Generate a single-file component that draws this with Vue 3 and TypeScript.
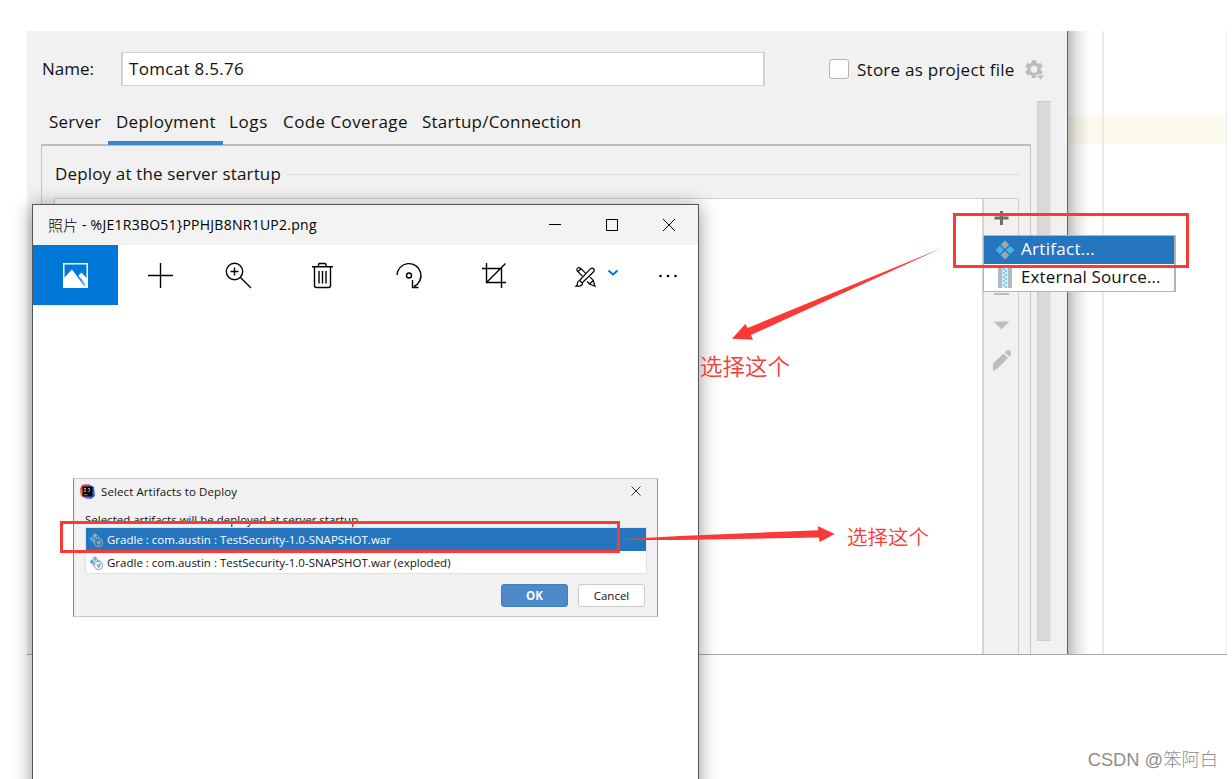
<script setup lang="ts">
interface Tab {
  key: string
  label: string
  active?: boolean
}

interface Artifact {
  name: string
  selected: boolean
}

const tabs: Tab[] = [
  { key: 'server', label: 'Server' },
  { key: 'deployment', label: 'Deployment', active: true },
  { key: 'logs', label: 'Logs' },
  { key: 'coverage', label: 'Code Coverage' },
  { key: 'startup', label: 'Startup/Connection' },
]

const artifacts: Artifact[] = [
  { name: 'Gradle : com.austin : TestSecurity-1.0-SNAPSHOT.war', selected: true },
  { name: 'Gradle : com.austin : TestSecurity-1.0-SNAPSHOT.war (exploded)', selected: false },
]
</script>

<template>
  <main class="desktop">
    <section class="ide">
      <div class="config">
        <div class="form">
          <div class="name-row">
            <label class="name-label">Name:</label>
            <div class="name-input">Tomcat 8.5.76</div>
            <span class="checkbox"></span>
            <span class="store">Store as project file</span>
            <svg class="gear" width="20" height="21" viewBox="0 0 20 21">
              <g fill="#bdbdbd">
                <rect x="6.7" y="0.3" width="4.6" height="17.8" rx="0.6" />
                <rect x="6.7" y="0.3" width="4.6" height="17.8" rx="0.6" transform="rotate(60 9 9.2)" />
                <rect x="6.7" y="0.3" width="4.6" height="17.8" rx="0.6" transform="rotate(120 9 9.2)" />
                <circle cx="9" cy="9.2" r="6.9" />
                <path d="M11 15h9l-4.400 5z" stroke="#f1f1f1" stroke-width="0.8" />
              </g>
              <circle cx="9" cy="9.2" r="3.5" fill="#f1f1f1" />
            </svg>
          </div>
          <nav class="tabs">
            <span v-for="tab in tabs" :key="tab.key" class="tab" :class="[tab.key, { active: tab.active }]">{{ tab.label }}</span>
          </nav>
          <div class="panel">
            <div class="group-title"><span class="t-deploy">Deploy at the server startup</span><i></i></div>
            <div class="list">
              <div class="list-body"></div>
              <div class="list-tools">
                <svg width="34" height="180" viewBox="0 0 34 180">
                  <path d="M17.500 12v14M10.500 19h14" stroke="#6e6e6e" stroke-width="3" />
                  <path d="M10 95h15" stroke="#bdbdbd" stroke-width="2" />
                  <path d="M9.500 122.500h16l-8 8z" fill="#bdbdbd" />
                  <path d="M9 168l0-3.500 10.500-10 4.500 4.500-10.500 10.500-4.500 2.500zM20.800 153.300l2-2q1.500-1 3 .4l1 1q1.200 1.500 0 3l-1.800 2z" fill="#bdbdbd" />
                </svg>
              </div>
            </div>
          </div>
        </div>
        <div class="scroll"><div class="thumb"></div></div>
      </div>
      <div class="editor"><div class="caret-line"></div><div class="guide"></div></div>
    </section>

    <div class="menu">
      <div class="menu-item chosen">
        <svg width="20" height="20" viewBox="0 0 20 20">
          <path d="M10 0.500l4.300 4.300-4.300 4.300-4.300-4.300zM10 10.900l4.300 4.300-4.300 4.300-4.300-4.300z" fill="#9aa7b0" />
          <path d="M4.800 5.700l4.300 4.300-4.300 4.300L0.500 10zM15.200 5.700l4.300 4.300-4.300 4.300-4.300-4.300z" fill="#40b6e0" />
        </svg>
        <span class="t-artifact">Artifact...</span>
      </div>
      <div class="menu-item">
        <svg width="20" height="20" viewBox="0 0 20 20">
          <path d="M3 0h4v20H3zM13 0h4v20h-4z" fill="#aeb9c0" />
          <path d="M7 0h6v20H7z" fill="#d6eef8" />
          <path d="M8 1h2M10 3h2M8 5h2M10 7h2M8 9h2M10 11h2M8 13h2M10 15h2M8 17h2M10 19h2" stroke="#62c1e4" stroke-width="1.400" />
        </svg>
        <span class="t-external">External Source...</span>
      </div>
    </div>

    <section class="photos">
      <header class="titlebar">
        <span class="title"><span class="cjk">照片</span><span class="t-file"> - %JE1R3BO51}PPHJB8NR1UP2.png</span></span>
        <svg class="win-controls" width="128" height="14" viewBox="0 0 128 14" fill="none" stroke="#000">
          <path d="M0 6.500h12M57.500 1.500h11v11h-11zM114 1l12 12M126 1l-12 12" />
        </svg>
      </header>
      <div class="toolbar">
        <div class="home">
          <svg width="25" height="25" viewBox="0 0 25 25">
            <path d="M.75.750h23.500v23.500H.750z" fill="none" stroke="#fff" stroke-width="1.500" />
            <path d="M1 15L9 6.500 22 24H1z" fill="#fff" />
            <path d="M15.500 12.500L18.500 9.500 25 16.500V24.500l-3-1z" fill="#fff" />
            <path d="M17.500 15l4.500 7" stroke="#0078d7" stroke-width=".7" />
          </svg>
        </div>
        <svg class="tools" width="580" height="60" viewBox="0 0 580 60" fill="none" stroke="#000" stroke-width="1.400">
          <path d="M30 30.500h25M42.500 18v25" />
          <circle cx="116.500" cy="26.500" r="8.200" />
          <path d="M112.500 26.500h8M116.500 22.500v8M122.500 32.500l10.500 10.500" />
          <path d="M194 21.700h21M200.500 21v-1.500q0-1 1-1h5.500q1 0 1 1V21M196.500 22v18.500q0 2 2 2h12q2 0 2-2V22M201 26v12.500M204.500 26v12.500M208 26v12.500" />
          <path d="M279 30a12 12 0 1 1 17 11.500M294.500 35v7.500h6" />
          <circle cx="291" cy="30.500" r="2.500" />
          <path d="M364 23.500h19.500V43M368.500 18v19.500H388M368.500 37.500l19-19" />
          <g stroke-width="1.200">
            <path d="M461.500 35.500l10.800-11.600q1.800-1.600 3.300-.2 1.400 1.600-.2 3.300L464 38M461.500 35.500l3 2.700q.3 3.300-6.500 3 2-1.500 1.500-3.500.5-1.800 2-2.200z" />
            <path d="M464.200 31l-5-5q-1-1.700.3-2.900 1.500-1.100 3 .1l5 5M459.800 26.800l3.500-3.300M469 36.500l2.500 2.500 5.500 2.200-1.800-5.800-3.200-3.200M471.500 39l3.500-3.300" />
          </g>
          <path d="M490.500 25.500l4.500 4 4.500-4" stroke="#0078d7" stroke-width="2" />
          <g fill="#000" stroke="none"><circle cx="542.500" cy="31" r="1.300" /><circle cx="550" cy="31" r="1.300" /><circle cx="557.500" cy="31" r="1.300" /></g>
        </svg>
      </div>

      <div class="dialog">
        <div class="dlg-title">
          <svg width="15" height="15" viewBox="0 0 15 15">
            <path d="M0 5l2-4 5-1 3 3-5 10-4-2z" fill="#fc315f" />
            <path d="M0 6l4-1 1 9-4-2z" fill="#fc801d" />
            <path d="M8 0l6 3 1 9-4 3-7-1 5-5z" fill="#3b5fe8" />
            <path d="M4 12l3 3 4-2z" fill="#b34ae0" />
            <path d="M2.500 2.500h10v10h-10z" fill="#000" />
            <path d="M4 4.500h2M5 4.500v3M4 7.500h2M8 4.500h1.500v2.500q-.5.700-1.800.4M4 10.800h3.500" fill="none" stroke="#ddd" stroke-width=".7" />
          </svg>
          <span class="t-select">Select Artifacts to Deploy</span>
          <svg class="dlg-close" width="10" height="10" viewBox="0 0 10 10"><path d="M.5.500l9 9M9.500.500l-9 9" stroke="#333" /></svg>
        </div>
        <p class="prompt">Selected artifacts will be deployed at server startup</p>
        <div class="rows">
          <div v-for="item in artifacts" :key="item.name" class="row" :class="{ selected: item.selected }">
            <svg width="14" height="14" viewBox="0 0 14 14">
              <path d="M6 0l2.600 2.600L6 5.200 3.400 2.600zM6 6l2.600 2.600L6 11.200 3.400 8.600z" fill="#9aa7b0" />
              <path d="M3 3.200l2.600 2.600L3 8.400.4 5.800zM9.200 3.200l2.600 2.600-2.600 2.600-2.600-2.600z" fill="#40b6e0" />
              <circle cx="9.500" cy="9.500" r="4" :fill="item.selected ? '#2675bf' : '#fff'" stroke="#9aa7b0" stroke-width="1.100" />
              <path d="M7 8l2 1 1-2 2 1-1 3-2 1-1-2z" fill="#9aa7b0" />
            </svg>
            <span>{{ item.name }}</span>
          </div>
        </div>
        <div class="buttons">
          <button class="btn ok">OK</button>
          <button class="btn cancel">Cancel</button>
        </div>
      </div>
    </section>

    <div class="mark mark-menu"></div>
    <div class="mark mark-row"></div>
    <svg class="arrows" width="1232" height="779" viewBox="0 0 1232 779" fill="#fb3a37">
      <path d="M732 338.700L745.300 324l2.400 4L942 248 751 335l2 4.700z" />
      <path d="M626 539L680 536 818.300 530.300l-.6-4.300 17 8-15 8-1-4.500L680 540 626 540z" />
    </svg>
    <span class="note note-top">选择这个</span>
    <span class="note note-bottom">选择这个</span>
    <span class="watermark">CSDN @笨阿白</span>
  </main>
</template>

<style>
body {
  margin: 0;
  overflow: hidden;
}
</style>

<style scoped>
.desktop {
  position: relative;
  width: 1232px;
  height: 779px;
  overflow: hidden;
  background: #fff;
  color: #111;
  font-family: "Open Sans", "Noto Sans", "Noto Sans CJK SC", sans-serif;
  font-size: 17px;
  white-space: nowrap;
}
.desktop * { box-sizing: border-box; }
svg { display: block; flex: none; }

.ide {
  position: absolute;
  left: 27px;
  top: 31px;
  width: 1200px;
  height: 624px;
  display: flex;
  border-bottom: 1px solid #a9a9a9;
  isolation: isolate;
  letter-spacing: .22px;
}
.config {
  display: flex;
  width: 1041px;
  background: #f1f1f1;
  border-right: 1px solid #666;
}
.form {
  display: flex;
  flex-direction: column;
  width: 996px;
  margin-left: 14px;
}
.name-row {
  display: flex;
  align-items: center;
  width: 1004px;
  height: 34px;
  margin-top: 21px;
}
.name-label { width: 80px; padding: 0 0 2px 1px; letter-spacing: 0; }
.name-input {
  width: 644px;
  height: 34px;
  padding-left: 6px;
  line-height: 31px;
  background: #fff;
  border: 2px solid #d2d2d2;
  border-width: 1px 2px;
  letter-spacing: .3px;
}
.checkbox {
  width: 20px;
  height: 20px;
  margin: 0 8px 0 64px;
  background: #fff;
  border: 1px solid #b5b5b5;
  border-radius: 3px;
}
.store { width: 159px; letter-spacing: .25px; }
.gear { margin: 2px 0 0 9px; }
.tabs {
  display: flex;
  height: 46px;
  margin-top: 12px;
  line-height: 48px;
  position: relative;
  z-index: 1;
}
.tab { padding-left: 8px; height: 47px; }
.server { width: 67px; }
.deployment { width: 115px; letter-spacing: .28px; }
.logs { width: 52px; padding-left: 6px; letter-spacing: .6px; }
.coverage { width: 139px; letter-spacing: .42px; }
.active { border-bottom: 4px solid #4083c9; }
.panel {
  flex: 1;
  display: flex;
  flex-direction: column;
  width: 990px;
  border: 1px solid #c6c6c6;
  border-top: 2px solid #bdbdbd;
  border-bottom: 0;
  padding: 0 11px 0 12px;
}
.group-title { display: flex; align-items: center; height: 52px; padding-top: 4px; line-height: 24px; letter-spacing: .16px; }
.group-title i { flex: 1; margin-left: 7px; border-top: 1px solid #d8d8d8; }
.t-deploy { width: 226px; padding-left: 1px; }
.list { flex: 1; display: flex; border: 1px solid #cfcfcf; border-bottom: 0; }
.list-body { flex: 1; background: #fff; }
.list-tools { width: 36px; border-left: 2px solid #d4d4d4; }
.scroll { padding: 70px 0 0; }
.thumb { width: 14px; height: 540px; background: #d9d9d9; border: 1px solid #cdcdcd; border-right-color: #e4e4e4; }
.editor { position: relative; flex: 1; border-right: 1px solid #eee; }
.editor::before {
  content: "";
  position: absolute;
  inset: 0 auto 0 0;
  z-index: 1;
  width: 23px;
  background: linear-gradient(90deg, rgba(0, 0, 0, .25), rgba(0, 0, 0, .12) 35%, rgba(0, 0, 0, .03) 75%, transparent);
}
.caret-line { height: 28px; margin-top: 85px; background: #fcfaed; }
.guide { position: absolute; left: 34px; top: 0; bottom: 0; width: 2px; background: #ebebeb; }

.menu {
  position: absolute;
  left: 983px;
  top: 235px;
  width: 193px;
  height: 57px;
  background: #fff;
  border: 1px solid #b4b4b4;
  border-right-width: 2px;
}
.menu-item { display: flex; align-items: center; gap: 6px; height: 28px; padding-left: 11px; }
.menu-item span { padding-bottom: 3px; letter-spacing: .12px; }
.menu-item .t-artifact { letter-spacing: .3px; }
.chosen { background: #2675bf; color: #fff; }

.photos {
  position: absolute;
  left: 32px;
  top: 204px;
  width: 667px;
  height: 600px;
  background: #fff;
  border: 1px solid #555;
  box-shadow: 0 2px 18px rgba(0, 0, 0, .42);
}
.titlebar {
  display: flex;
  align-items: center;
  justify-content: space-between;
  height: 40px;
  padding: 0 21px 0 15px;
  background: #f3f3f3;
  color: #000;
  font-size: 14px;
}
.title { display: flex; white-space: pre; line-height: 20px; }
.t-file { letter-spacing: .26px; }
.cjk { font-family: "Noto Sans CJK SC", sans-serif; font-size: 15px; font-weight: 300; }
.toolbar { display: flex; height: 60px; }
.home { display: flex; flex: none; align-items: center; justify-content: center; width: 85px; background: #0078d7; }

.dialog {
  display: flex;
  flex-direction: column;
  width: 585px;
  height: 139px;
  margin: 173px 0 0 40px;
  padding: 0 10px 0 11px;
  background: #f1f1f1;
  border: 1px solid #c8c8c8;
  border-left-color: #858585;
  border-right-color: #999;
  font-size: 11.500px;
}
.dlg-title { display: flex; align-items: center; height: 26px; margin-left: -5px; padding-bottom: 2px; }
.t-select { margin-left: 6px; letter-spacing: .1px; }
.dlg-close { margin: 0 6px 0 auto; }
.prompt { height: 22px; margin: 0; line-height: 29px; overflow: hidden; }
.rows { height: 47px; background: #fff; border: 1px solid #e2e2e2; }
.row { display: flex; align-items: center; height: 23px; padding: 0 0 1px 3px; gap: 4px; }
.row svg { margin-top: 2px; }
.selected { background: #2675bf; color: #fff; }
.buttons { display: flex; justify-content: flex-end; gap: 10px; padding: 10px 2px 0 0; }
.btn {
  width: 67px;
  height: 23px;
  padding: 0;
  border: 1px solid #cacaca;
  border-radius: 3px;
  background: #fff;
  color: #111;
  font: inherit;
  line-height: 22px;
}
.ok { background: #4d89c9; border-color: #427dbc; color: #fff; font-weight: 700; }

.mark { position: absolute; border: 3px solid #fb3a37; }
.mark-menu { left: 953px; top: 213px; width: 236px; height: 55px; }
.mark-row { left: 60px; top: 521px; width: 560px; height: 32px; }
.arrows { position: absolute; left: 0; top: 0; }
.note { position: absolute; color: #fb3a37; font-family: "Noto Sans CJK SC", sans-serif; font-weight: 350; }
.note-top { left: 700px; top: 349px; font-size: 22.500px; line-height: 32px; }
.note-bottom { left: 847px; top: 521px; font-size: 20.500px; line-height: 30px; }
.watermark {
  position: absolute;
  right: 14px;
  top: 747px;
  color: #8e8e8e;
  font-family: "Liberation Sans", "Noto Sans CJK SC", sans-serif;
  font-weight: 300;
  font-size: 18.300px;
  line-height: 26px;
}
</style>
